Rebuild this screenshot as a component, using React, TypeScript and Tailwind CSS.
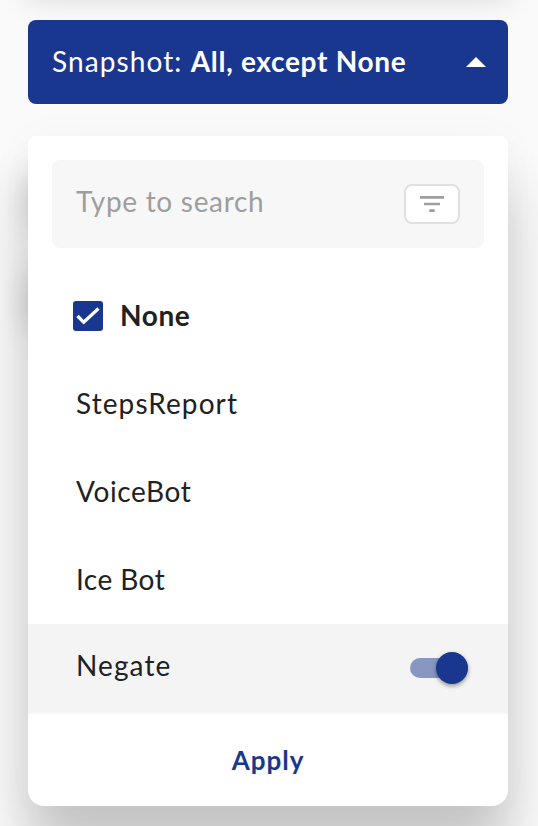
const options = [
  { name: "StepsReport", spacing: "tracking-[1.1px]" },
  { name: "VoiceBot", spacing: "tracking-[0.6px]" },
  { name: "Ice Bot", spacing: "tracking-[0.45px]" },
];

export default function App() {
  return (
    <main className="relative isolate h-[826px] w-[538px] overflow-hidden bg-[#fafafa] px-7 pt-5 font-[Lato,sans-serif] text-[28px] leading-10 text-[#212121]">
      {/* Shadows of the cards that sit behind the open menu */}
      <div className="absolute -top-20 left-7 -z-10 h-[74px] w-[480px] shadow-[0_4px_28px_2px_rgba(0,0,0,0.13)]" />
      <div className="absolute left-7 top-[176px] -z-10 h-[44px] w-[300px] shadow-[0_0_32px_0_rgba(0,0,0,0.16)]" />
      <div className="absolute left-7 top-[276px] -z-10 h-[52px] w-[300px] shadow-[0_0_32px_0_rgba(0,0,0,0.18)]" />

      <button className="flex h-[84px] w-[480px] items-center justify-between rounded-lg bg-[#1a378f] pl-6 pr-[22px] text-white">
        <span className="flex whitespace-pre pb-0.5">
          <span className="tracking-[1.1px]">Snapshot: </span>
          <b className="tracking-[0.7px]">All, except None</b>
        </span>
        <svg width="20" height="10" viewBox="0 0 20 10" fill="currentColor"><path d="M0 10 10 0l10 10Z" /></svg>
      </button>

      <section className="mt-8 flex h-[670px] w-[480px] flex-col overflow-hidden rounded-t-lg rounded-b-2xl bg-white shadow-[0_52px_56px_0_rgba(0,0,0,0.2),0_8px_44px_2px_rgba(0,0,0,0.04)]">
        <div className="mx-6 mt-6 flex h-[88px] shrink-0 items-center justify-between rounded-lg bg-[#f7f7f7] px-6">
          <span className="pb-1.5 tracking-[0.7px] text-[#9e9e9e]">Type to search</span>
          <button className="flex h-10 w-14 items-center justify-center rounded-lg border-2 border-[#e0e0e0] bg-white">
            <svg width="24" height="16" viewBox="0 0 24 16" fill="#9e9e9e">
              <path d="M0 0h24v2.7H0ZM4 6.7h16v2.6H4ZM9.3 13.3h5.4V16H9.3Z" />
            </svg>
          </button>
        </div>
        <div className="mt-6 flex h-[88px] shrink-0 items-center pl-[45px]">
          <span className="flex size-[30px] items-center justify-center rounded-[3px] bg-[#1a378f]">
            <svg width="24" height="18" viewBox="0 0 24 18" fill="none" stroke="white" strokeWidth="3.2"><path d="m1.5 9 6.2 6.2L22.5 1.5" /></svg>
          </span>
          <b className="ml-[17px] pb-0.5 tracking-[0.6px]">None</b>
        </div>
        {options.map((option) => (
          <div key={option.name} className="flex h-[88px] shrink-0 items-center pb-0.5 pl-12">
            <span className={option.spacing}>{option.name}</span>
          </div>
        ))}
        <div className="flex h-[90px] shrink-0 items-center justify-between border-b-2 border-[#f7f7f7] bg-[#f4f4f4] pl-12 pr-10">
          <span className="pb-1.5 tracking-[1.1px]">Negate</span>
          <span className="flex h-5 w-[58px] items-center justify-end rounded-full bg-[#8896c2]">
            <span className="size-8 shrink-0 rounded-full bg-[#1a378f] shadow-[0_2px_4px_rgba(0,0,0,0.4)]" />
          </span>
        </div>
        <button className="flex flex-1 items-center justify-center text-[26px] font-bold tracking-[1px] text-[#1a378f]">Apply</button>
      </section>
    </main>
  );
}
